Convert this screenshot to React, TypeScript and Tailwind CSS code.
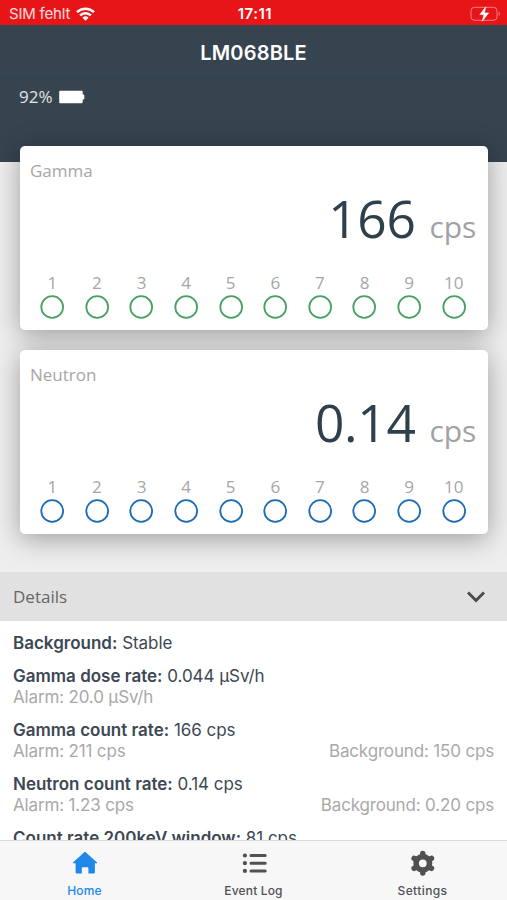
import React from 'react';

interface GaugeCardProps {
  title: string;
  value: string;
  ringClass: string;
}

const LEVELS = [1, 2, 3, 4, 5, 6, 7, 8, 9, 10];

const DETAILS = [
  { label: 'Background:', value: 'Stable' },
  { label: 'Gamma dose rate:', value: '0.044 µSv/h', alarm: 'Alarm: 20.0 µSv/h' },
  { label: 'Gamma count rate:', value: '166 cps', alarm: 'Alarm: 211 cps', background: 'Background: 150 cps' },
  { label: 'Neutron count rate:', value: '0.14 cps', alarm: 'Alarm: 1.23 cps', background: 'Background: 0.20 cps' },
  { label: 'Count rate 200keV window:', value: '81 cps' },
];

const StatusBar: React.FC = () => (
  <div className="grid h-[25px] shrink-0 grid-cols-3 items-center bg-[#e81518] pt-[2px] pr-[6px] pl-[9px] text-[15px] leading-none text-white">
    <div className="flex items-center gap-[6px]">
      <span className="tracking-[-0.2px] text-white/85">SIM fehlt</span>
      <svg width="19" height="14" viewBox="0 0 19 14" fill="none" stroke="white" strokeWidth="2.5">
        <path d="M1 5.2a12.2 12.2 0 0 1 17 0" />
        <path d="M4.1 8.4a7.8 7.8 0 0 1 10.8 0" />
        <path d="M9.5 13.8 6.4 10.7a4.5 4.5 0 0 1 6.2 0z" fill="white" stroke="none" />
      </svg>
    </div>
    <span className="text-center font-semibold tracking-[0.5px]">17:11</span>
    <svg className="justify-self-end" width="31" height="16" viewBox="0 0 31 16">
      <rect x="1" y="1.3" width="26" height="13" rx="3.5" fill="none" stroke="white" strokeOpacity="0.45" />
      <path d="M28.7 5.5v4.6c1.6-.8 1.6-3.8 0-4.6z" fill="white" fillOpacity="0.45" />
      <path d="M15.8.8 9.8 8.6h4l-1.5 6.6 6.4-8.3h-4.2z" fill="white" stroke="white" strokeWidth="0.5" />
    </svg>
  </div>
);

const GaugeCard: React.FC<GaugeCardProps> = ({ title, value, ringClass }) => (
  <div className="flex h-[184px] flex-col rounded-[5px] bg-white pr-3 pl-[10px] font-['Open_Sans',sans-serif] shadow-[0_5px_27px_rgba(0,0,0,0.34)]">
    <div className="mt-[13px] text-[17px] leading-6 text-[#a6a6a6]">{title}</div>
    <div className="mt-[3px] flex h-16 items-baseline justify-end gap-[14px] leading-[64px]">
      <span className="text-[51.5px] tracking-[-0.3px] text-[#2f404d]">{value}</span>
      <span className="text-[30px] tracking-[-0.2px] text-[#a2a2a2]">cps</span>
    </div>
    <div className="mt-[23px] grid grid-cols-10">
      {LEVELS.map((n) => (
        <div key={n} className="flex flex-col items-center">
          <span className="h-[22px] text-[17px] leading-5 text-[#a6a6a6]">{n}</span>
          <svg className={ringClass} width="24" height="24" viewBox="0 0 24 24" fill="none" stroke="currentColor" strokeWidth="1.8">
            <circle cx="12.2" cy="12" r="10.9" />
          </svg>
        </div>
      ))}
    </div>
  </div>
);

const TabBar: React.FC = () => (
  <nav className="grid h-[60px] shrink-0 grid-cols-3 border-t border-[#d9dcde] bg-[#f7f7f7] text-[12px] font-medium text-[#505155]">
    <div className="flex flex-col items-center pt-[9px] text-[#2088e9]">
      <svg width="26" height="26" viewBox="0 0 26 26" fill="currentColor">
        <path d="M13 2c.4 0 .7.1 1 .4l10.8 9.9c.5.5.3 1-.4 1h-1.5v8.9c0 .9-.5 1.400-1.300 1.400h-5.200v-5.100c0-.8-.4-1.200-1.200-1.200h-4.200c-.8 0-1.200.4-1.200 1.200v5.100H4.900c-.8 0-1.300-.5-1.300-1.400v-8.900H1.600c-.7 0-.9-.5-.4-1L12 2.400c.3-.3.6-.4 1-.4z" />
      </svg>
      <span className="mt-[7px] leading-4 tracking-[0.2px]">Home</span>
    </div>
    <div className="flex flex-col items-center pt-[9px]">
      <svg width="26" height="26" viewBox="0 0 26 26" stroke="currentColor" strokeLinecap="round">
        <path d="M10 5.500h14.200M10 13.200h14.200M10 20.900h14.200" strokeWidth="3" />
        <path d="M3.900 5.500h.01M3.900 13.200h.01M3.900 20.900h.01" strokeWidth="4.200" />
      </svg>
      <span className="mt-[7px] leading-4 tracking-[0.15px]">Event Log</span>
    </div>
    <div className="flex flex-col items-center pt-[9px]">
      <svg width="26" height="26" viewBox="0 0 26 26" fill="none" stroke="currentColor">
        <circle cx="12.800" cy="13.300" r="6.700" strokeWidth="5.600" />
        <path
          d="M12.800 5v-1.500M12.800 21.600v1.500M19.600 9.400l1.900-1.100M19.600 17.200l1.900 1.100M6 9.400 4.100 8.300M6 17.200l-1.900 1.100"
          strokeWidth="5.400"
          strokeLinecap="round"
        />
      </svg>
      <span className="mt-[7px] leading-4 tracking-[0.4px]">Settings</span>
    </div>
  </nav>
);

const App: React.FC = () => {
  return (
    <div className="flex h-[900px] w-[507px] flex-col overflow-hidden bg-[#eeeeee] font-['Inter',sans-serif]">
      <StatusBar />

      <header className="h-[137px] shrink-0 bg-[#364450] text-white">
        <h1 className="h-[54px] border-b border-[#30404c] text-center text-[20px] leading-[56px] font-semibold tracking-[0.2px]">LM068BLE</h1>
        <div className="flex items-center gap-[6px] pt-[6px] pl-[19px]">
          <span className="font-['Open_Sans',sans-serif] text-[17px] leading-6 text-white/85">92%</span>
          <svg width="26" height="14" viewBox="0 0 26 14" fill="white">
            <path d="M1 .7h21.500c.8 0 1.200.4 1.200 1.200v2.600h.8c.5 0 .8.300.8.800v3.400c0 .5-.3.800-.8.800h-.8v2.600c0 .8-.4 1.200-1.200 1.200H1c-.5 0-.8-.3-.8-.8v-11c0-.5.300-.8.800-.8z" />
          </svg>
        </div>
      </header>

      <main className="relative -mt-4 flex h-[426px] shrink-0 flex-col gap-5 pr-[19px] pl-5">
        <GaugeCard title="Gamma" value="166" ringClass="text-[#48a163]" />
        <GaugeCard title="Neutron" value="0.14" ringClass="text-[#1c6bb3]" />
      </main>

      <div className="relative flex h-[49px] shrink-0 items-center justify-between bg-[#e1e1e1] pr-[21px] pl-[13px]">
        <span className="font-['Open_Sans',sans-serif] text-[17px] text-[#666666]">Details</span>
        <svg width="20" height="14" viewBox="0 0 20 14" fill="none" stroke="#4b4b4d" strokeWidth="3">
          <path d="m2 2.500 8 8 8-8" />
        </svg>
      </div>

      <section className="flex min-h-0 flex-1 flex-col gap-3 overflow-hidden bg-white px-[13px] pt-3 text-[17px] leading-[21px]">
        {DETAILS.map((row) => (
          <div key={row.label} className="shrink-0">
            <p className="text-[#3c4853]">
              <span className="font-semibold">{row.label}</span> <span className="tracking-[-0.05px]">{row.value}</span>
            </p>
            {row.alarm && (
              <div className="flex justify-between tracking-[-0.16px] text-[#a9a9a9]">
                <span>{row.alarm}</span>
                <span>{row.background}</span>
              </div>
            )}
          </div>
        ))}
      </section>

      <TabBar />
    </div>
  );
};

export default App;
